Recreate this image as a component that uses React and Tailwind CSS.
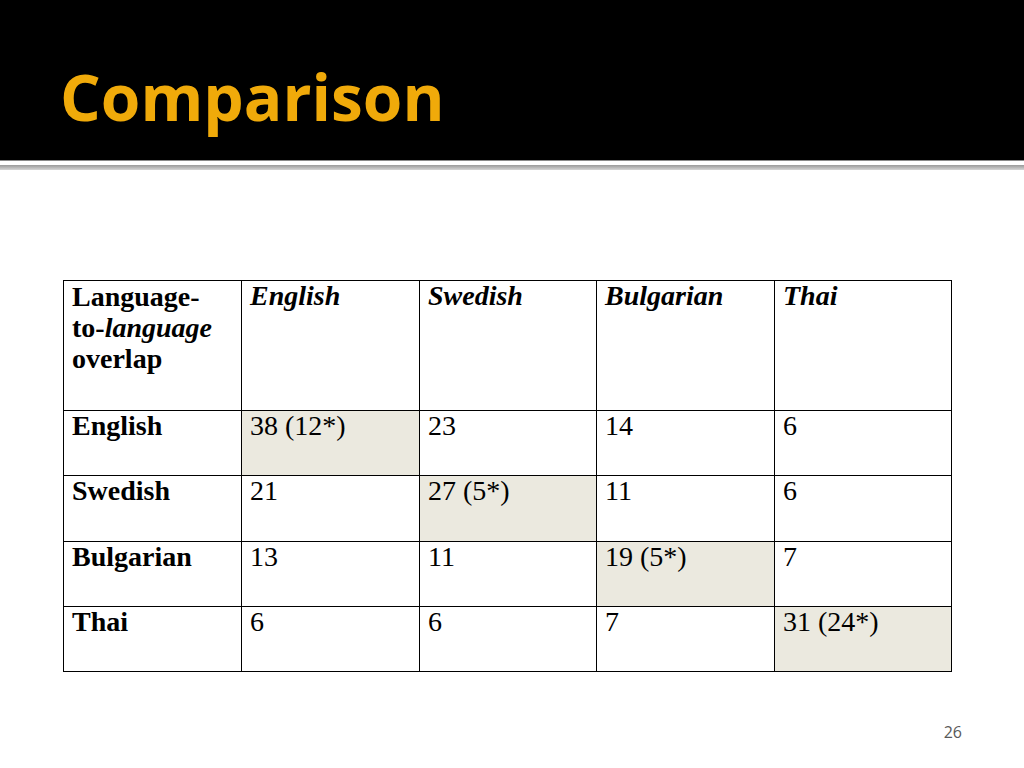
import React from "react";

const columns = ["English", "Swedish", "Bulgarian", "Thai"];

const rows = [
  { name: "English", values: ["38 (12*)", "23", "14", "6"], h: "h-[65px]" },
  { name: "Swedish", values: ["21", "27 (5*)", "11", "6"], h: "h-[66px]" },
  { name: "Bulgarian", values: ["13", "11", "19 (5*)", "7"], h: "h-[65px]" },
  { name: "Thai", values: ["6", "6", "7", "31 (24*)"], h: "h-[65px]" },
];

const cell = "border border-black align-top px-2 pt-0 text-left";

const App = () => {
  return (
    <div className="w-[1024px] h-[768px] bg-white flex flex-col overflow-hidden">
      {/* slide title bar */}
      <div className="h-[160px] bg-black pl-[60px] pt-[65px]">
        <h1
          className="text-[64px] leading-none font-bold text-[#f0aa0a]"
          style={{ fontFamily: '"Open Sans", sans-serif' }}
        >
          Comparison
        </h1>
      </div>
      <div className="h-px bg-[#8a8a8a]" />
      <div className="h-1 bg-white" />
      <div className="h-[5px] bg-gradient-to-b from-[#9a9a9a] to-[#d6d6d6]" />

      <div className="pt-[110px] pl-[63px]">
        <table
          className="table-fixed border-collapse text-[28px] leading-[30px] text-black"
          style={{ fontFamily: '"Liberation Serif", serif' }}
        >
          <colgroup>
            <col className="w-[178px]" />
            <col className="w-[178px]" />
            <col className="w-[177px]" />
            <col className="w-[178px]" />
            <col className="w-[177px]" />
          </colgroup>
          <thead>
            <tr className="h-[130px]">
              <th className={`${cell} font-bold leading-[31px]`}>
                Language-
                <br />
                to-<i>language</i>
                <br />
                overlap
              </th>
              {columns.map((c) => (
                <th key={c} className={`${cell} font-bold italic`}>
                  {c}
                </th>
              ))}
            </tr>
          </thead>
          <tbody>
            {rows.map((r, i) => (
              <tr key={r.name} className={r.h}>
                <td className={`${cell} font-bold`}>{r.name}</td>
                {r.values.map((v, j) => (
                  <td
                    key={j}
                    className={`${cell} ${i === j ? "bg-[#ebe9df]" : ""}`}
                  >
                    {v}
                  </td>
                ))}
              </tr>
            ))}
          </tbody>
        </table>
      </div>

      <div className="mt-auto flex justify-end pr-[62px] pb-[24px]">
        <span
          className="text-[16px] text-[#595959]"
          style={{ fontFamily: '"Open Sans", sans-serif' }}
        >
          26
        </span>
      </div>
    </div>
  );
};

export default App;
